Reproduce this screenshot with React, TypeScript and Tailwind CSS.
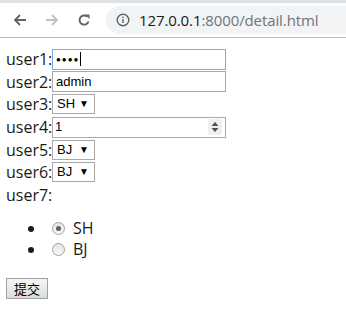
import React from "react";

const Arrow = ({ dir, color }: { dir: "left" | "right"; color: string }) => (
  <svg width="16" height="16" viewBox="0 0 16 16" className={dir === "right" ? "rotate-180" : ""}>
    <path d="M14 8H3M8 3L3 8l5 5" fill="none" stroke={color} strokeWidth="1.8" />
  </svg>
);

const Row = ({ label, children }: { label: string; children?: React.ReactNode }) => (
  <div className="flex h-[22.6px] items-center">
    <span className="w-[46px]">{label}</span>
    {children}
  </div>
);

const Select = ({ value }: { value: string }) => (
  <div className="flex h-[20px] w-[43px] items-center justify-between border border-[#a9a9a9] pl-[4px] pr-[5px] text-[13px] font-['Liberation_Sans',sans-serif] text-black">
    <span>{value}</span>
    <span className="text-[10px]">▼</span>
  </div>
);

export default function App() {
  return (
    <div className="h-[319px] w-[346px] overflow-hidden bg-white font-['Open_Sans',sans-serif] text-[16px] leading-[22px] text-[#1a1a1a]">
      <div className="h-[3px] bg-[#dee1e6]" />
      <div className="flex h-[35px] items-center border-b border-[#bcbcbc] bg-white">
        <div className="ml-[12px] flex items-center gap-[16px]">
          <Arrow dir="left" color="#5f6368" />
          <Arrow dir="right" color="#bdc1c6" />
          <svg width="16" height="16" viewBox="0 0 16 16">
            <path d="M12.5 9.5A4.6 4.6 0 1 1 11.2 4.6" fill="none" stroke="#5f6368" strokeWidth="1.9" />
            <path d="M9 2.5h4.5V7z" fill="#5f6368" />
          </svg>
        </div>
        <div className="ml-[14px] flex h-[28px] flex-1 items-center rounded-l-full bg-[#f1f3f4] pl-[10px]">
          <svg width="14" height="14" viewBox="0 0 14 14">
            <circle cx="7" cy="7" r="5.8" fill="none" stroke="#5f6368" strokeWidth="1.4" />
            <rect x="6.3" y="6" width="1.4" height="4" fill="#5f6368" />
            <rect x="6.3" y="3.6" width="1.4" height="1.4" fill="#5f6368" />
          </svg>
          <span className="ml-[9px] font-['Open_Sans',sans-serif] text-[15px] tracking-[-0.1px]">
            <span className="text-[#202124]">127.0.0.1</span>
            <span className="text-[#70757a]">:8000/detail.html</span>
          </span>
        </div>
      </div>

      <div className="px-[6px] pt-[10px]">
        <Row label="user1:">
          <div className="flex h-[21px] w-[174px] items-center border border-[#7ea6e0] pl-[3px]">
            <span className="text-[8px] tracking-[1px] text-black">●●●●</span>
            <span className="ml-[1px] h-[14px] w-[1px] bg-black" />
          </div>
        </Row>
        <Row label="user2:">
          <div className="flex h-[21px] w-[174px] items-center border border-[#a9a9a9] pl-[3px] font-['Liberation_Sans',sans-serif] text-[13px] text-black">
            admin
          </div>
        </Row>
        <Row label="user3:">
          <Select value="SH" />
        </Row>
        <Row label="user4:">
          <div className="flex h-[21px] w-[174px] items-center justify-between border border-[#a9a9a9] pl-[2px] pr-[3px] font-['Liberation_Sans',sans-serif] text-[13px] text-black">
            <span>1</span>
            <div className="flex h-[16px] w-[14px] items-center justify-center bg-[#efefef]">
              <svg width="8" height="12" viewBox="0 0 8 12">
                <path d="M4 1L7.5 5H0.5z M4 11L0.5 7H7.5z" fill="#505050" />
              </svg>
            </div>
          </div>
        </Row>
        <Row label="user5:">
          <Select value="BJ" />
        </Row>
        <Row label="user6:">
          <Select value="BJ" />
        </Row>
        <Row label="user7:" />

        <ul className="mt-[12px] list-disc pl-[40px]">
          <li className="h-[21px] leading-[21px]">
            <span className="inline-flex items-center align-top">
              <span className="ml-[6px] flex h-[13px] w-[13px] items-center justify-center rounded-full border border-[#a0a0a0] bg-gradient-to-b from-[#e4e4e4] to-[#f8f8f8]">
                <span className="h-[5px] w-[5px] rounded-full bg-[#606060]" />
              </span>
              <span className="ml-[8px] text-[#1a1a1a]">SH</span>
            </span>
          </li>
          <li className="h-[21px] leading-[21px]">
            <span className="inline-flex items-center align-top">
              <span className="ml-[6px] h-[13px] w-[13px] rounded-full border border-[#a0a0a0] bg-gradient-to-b from-[#e4e4e4] to-[#f8f8f8]" />
              <span className="ml-[8px] text-[#1a1a1a]">BJ</span>
            </span>
          </li>
        </ul>

        <button className="mt-[18px] h-[21px] w-[42px] border border-[#a0a0a0] bg-gradient-to-b from-[#f6f6f6] to-[#dddddd] font-['Noto_Sans_CJK_SC',sans-serif] text-[13px] leading-[19px] text-black">
          提交
        </button>
      </div>
    </div>
  );
}
